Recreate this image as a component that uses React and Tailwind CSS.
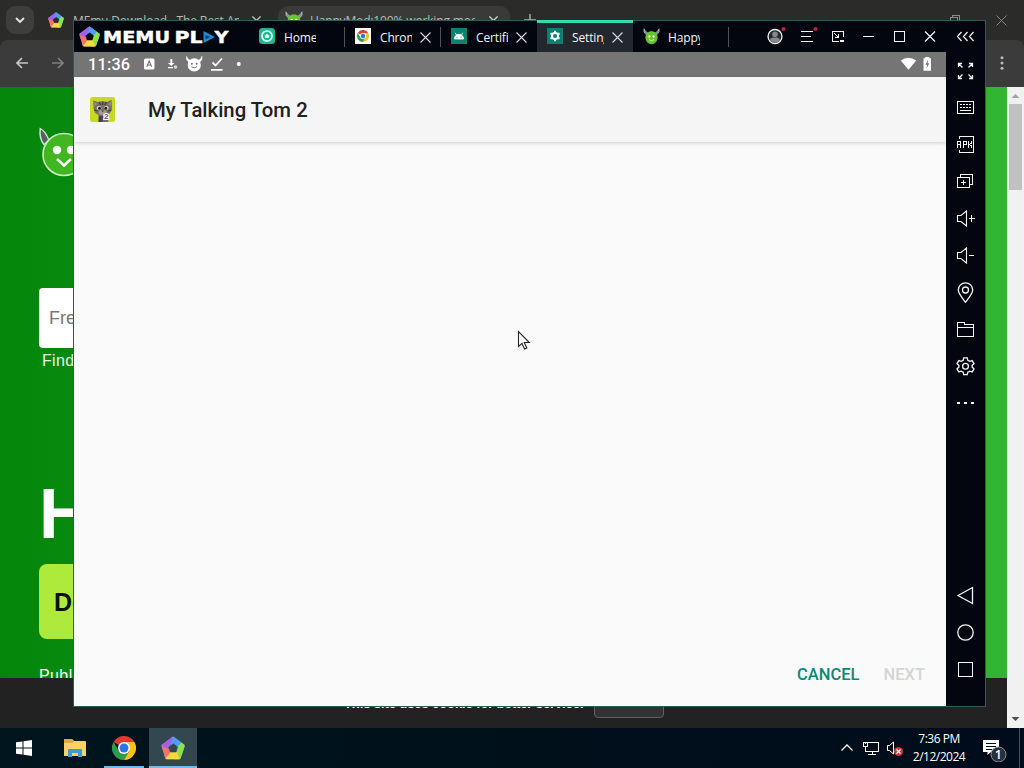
import React from 'react';

const UI = "font-['Open_Sans','Noto_Sans',sans-serif]";
const ARIAL = "font-['Liberation_Sans',Arial,sans-serif]";
const ROBOTO = "font-[Roboto,sans-serif]";

function Pentagon({ size, core = '#101820' }) {
  return (
    <svg width={size} height={size} viewBox="0 0 24 24" className="shrink-0">
      <path d="M12 1.5 L22.8 9.3 L18.7 22.5 H5.3 L1.2 9.3 Z" fill="#8f6fe0" stroke="#8f6fe0" strokeWidth="1.6" strokeLinejoin="round" />
      <path d="M12 0.6 L23 8.6 Q24 9.5 23.4 11 L21.5 17 L15.5 12 L9 7.5 Z" fill="#4fd6b4" />
      <path d="M10.5 1.2 Q12 0.2 13.5 1.3 L20 6.2 L16.5 11 L8.5 7 Z" fill="#4f9cf0" />
      <path d="M20.5 6.8 L23 8.6 Q24 9.5 23.4 11 L19.8 22 Q19.3 23.3 17.8 23.3 H13.5 L16 12 Z" fill="#8fe04a" />
      <path d="M18.5 23.3 H6.2 Q4.7 23.3 4.2 21.9 L3.5 19.5 L9 14.5 L16 16.5 Z" fill="#fbd93f" />
      <path d="M4.6 22.8 L0.6 10.8 Q0.3 9.3 1.4 8.5 L3.5 7 L8.5 11 L9.5 16 Z" fill="#f4716c" />
      <path d="M1.2 8.7 L10.8 1.2 L12 1.5 L9.5 8.5 L8 13 L1.5 10.5 Z" fill="#a062e8" />
      <path d="M12.3 7.8 L16.5 11 L15 16 H9.3 L7.7 11.2 Z" fill={core} stroke={core} strokeWidth="0.6" strokeLinejoin="round" />
    </svg>
  );
}

function Chrome({ size }) {
  return (
    <svg width={size} height={size} viewBox="0 0 24 24" className="shrink-0">
      <path d="M12 12 L1.6 6 A12 12 0 0 1 22.4 6 Z" fill="#e0392d" />
      <path d="M12 12 L17.2 15 L12 24 A12 12 0 0 1 1.6 6 L6.8 15 Z" fill="#2d9d4b" />
      <path d="M12 12 V6 H22.4 A12 12 0 0 1 12 24 L17.2 15 Z" fill="#fbc116" />
      <circle cx="12" cy="12" r="6" fill="#fff" />
      <circle cx="12" cy="12" r="4.5" fill="#2b76e5" />
    </svg>
  );
}

function Imp({ size }) {
  return (
    <svg width={size} height={size} viewBox="0 0 18 18" className="shrink-0">
      <path d="M1 0.8 L1 4.5 L3.8 7.2 L5 5.2 L2.6 3.4 Z M17 0.8 L17 4.500 L14.2 7.2 L13 5.2 L15.4 3.4 Z" fill="#7d8c94" stroke="#c3cdd0" strokeWidth="0.7" />
      <path d="M2.6 9.8 C2.6 5.8 5.2 3.4 9 3.4 S15.4 5.8 15.4 9.8 C15.4 14.200 12.5 17.2 9 17.2 S2.6 14.2 2.6 9.8 Z" fill="#67c52f" />
      <circle cx="6.8" cy="9" r="1.2" fill="#eaffda" />
      <circle cx="11.2" cy="9" r="1.2" fill="#eaffda" />
      <path d="M6.3 12.3 Q9 14.300 11.7 12.3" fill="none" stroke="#d9fbc6" />
    </svg>
  );
}

function Cross({ size = 11, color = '#d8dadd', width = 1.1 }) {
  return (
    <svg width={size} height={size} viewBox="0 0 11 11" className="shrink-0" fill="none" stroke={color} strokeWidth={width}>
      <path d="M0.5 0.5 L10.5 10.5 M10.5 0.5 L0.5 10.5" />
    </svg>
  );
}

function BrowserTabs() {
  return (
    <div className="flex h-[40px] items-center bg-[#2b2b2a] pl-[6px]">
      <div className="flex h-7 w-7 items-center justify-center rounded-[9px] bg-[#3e3e3d]">
        <svg width="10" height="7" viewBox="0 0 10 7" fill="none" stroke="#e8e8e8" strokeWidth="1.8"><path d="M1 1 L5 5 L9 1" /></svg>
      </div>
      <div className="flex h-full w-[244px] items-center pl-[14px]">
        <Pentagon size={16} core="#2b2b2a" />
        <span className="mt-px ml-[9px] w-[166px] overflow-hidden text-[12px] leading-4 tracking-[-0.15px] whitespace-nowrap text-[#b9b9b9]">MEmu Download - The Best An</span>
        <span className="ml-[13px]"><Cross size={9} color="#bdbdbd" width={1.6} /></span>
      </div>
      <div className="mt-[6px] flex h-[34px] w-[232px] items-center rounded-t-[10px] bg-[#3a3a39] pb-[6px] pl-[7px]">
        <Imp size={18} />
        <span className="mt-px ml-[7px] w-[165px] overflow-hidden text-[12px] leading-4 tracking-[-0.15px] whitespace-nowrap text-[#b9b9b9]">HappyMod:100% working mod a</span>
        <span className="ml-[14px]"><Cross size={9} color="#cfcfcf" width={1.6} /></span>
      </div>
      <svg className="ml-[14px]" width="12" height="12" viewBox="0 0 12 12" stroke="#a8a8a8" strokeWidth="1.5"><path d="M6 0 V12 M0 6 H12" /></svg>
      <div className="ml-auto flex items-center gap-[36px] pr-[17px]">
        <svg width="10" height="10" viewBox="0 0 10 10" fill="none" stroke="#8b8b8b" shapeRendering="crispEdges"><path d="M2.5 2.5 V0.5 H9.5 V7.5 H7.5 M0.5 2.5 H7.5 V9.5 H0.5 Z" /></svg>
        <Cross size={11} color="#858585" width={1} />
      </div>
    </div>
  );
}

function BrowserToolbar() {
  return (
    <div className="bg-[#2b2b2a]">
      <div className="flex h-[47px] items-center rounded-t-[8px] bg-[#3c3b3b] pl-4">
        <svg className="mb-px" width="12" height="12" viewBox="0 0 12 12" fill="none" stroke="#c8c8c8" strokeWidth="1.6"><path d="M12 6 H1 M6 1 L1 6 L6 11" /></svg>
        <svg className="mb-px ml-6" width="12" height="12" viewBox="0 0 12 12" fill="none" stroke="#808080" strokeWidth="1.6"><path d="M0 6 H11 M6 1 L11 6 L6 11" /></svg>
        <svg className="mr-[20px] mb-px ml-auto" width="4" height="14" viewBox="0 0 4 14" fill="#b9b9b9"><circle cx="2" cy="1.7" r="1.5" /><circle cx="2" cy="7" r="1.5" /><circle cx="2" cy="12.3" r="1.5" /></svg>
      </div>
    </div>
  );
}

function WebPage() {
  return (
    <div className={`${ARIAL} flex h-[641px]`}>
      <div className="flex w-[1007px] flex-col">
        <div className="h-[591px] overflow-hidden bg-gradient-to-r from-[#04860b] via-[#189f20] to-[#31b632] pt-[40px] pl-[38px]">
          <svg width="52" height="51" viewBox="0 0 52 51">
            <path d="M2.2 1.5 C1.5 8 3 14 6 17.5 L11 13.5 C9 8 7 4 2.2 1.5 Z" fill="#555f66" stroke="#cfe6cf" strokeWidth="1.4" />
            <circle cx="26" cy="27.5" r="21" fill="#40b621" stroke="#c8f0c0" strokeWidth="1.6" />
            <circle cx="19" cy="23" r="4.2" fill="#fff" />
            <circle cx="33" cy="23" r="4.2" fill="#fff" />
            <path d="M19 32 L26 38.5 L33 32" fill="none" stroke="#fff" strokeWidth="2.4" />
          </svg>
          <div className="mt-[110px] ml-[1px] flex h-[60px] w-[300px] items-center rounded bg-white pl-[10px] text-[18px] text-[#777]">Free</div>
          <div className="mt-[4px] ml-[4px] text-[16px] leading-[18px] tracking-[0.3px] text-[#e6f5e4]">Find</div>
          <div className="mt-[104px] ml-px h-[80px] text-[70px] leading-[80px] font-bold text-white">HappyMod</div>
          <div className="mt-[10px] ml-[1px] flex h-[75px] w-[300px] items-center rounded-lg bg-[#aeea3c] pt-[2px] pl-[15px] text-[25px] font-bold text-[#0b1200]">Download</div>
          <div className="mt-[28px] ml-px text-[16px] leading-[18px] tracking-[0.4px] text-white">Published</div>
        </div>
        <div className="flex h-[50px] items-start bg-[#222] pt-[8px] pl-[344px] text-white">
          <span className="w-[250px] pt-[9px] text-[13px] leading-[17px] font-bold tracking-[-0.1px] whitespace-nowrap">This site uses cookie for better service.</span>
          <span className="flex h-[32px] w-[70px] justify-center rounded border border-[#606461] bg-[#303332] pt-[9px] text-[12px] leading-[14px] font-bold">OK</span>
        </div>
      </div>
      <div className="flex w-[17px] flex-col items-center bg-[#f1f1f1]">
        <svg width="17" height="17" viewBox="0 0 17 17"><path d="M4.5 11 L8.5 7 L12.5 11 Z" fill="#a3a3a3" /></svg>
        <div className="h-[86px] w-[13px] bg-[#c1c1c1]" />
        <svg className="mt-auto" width="17" height="17" viewBox="0 0 17 17"><path d="M4.5 6 L8.5 10 L12.5 6 Z" fill="#505050" /></svg>
      </div>
    </div>
  );
}

function MemuTab({ icon, label, active, closable = true, sep = true }) {
  return (
    <div className={active ? 'relative flex h-[31px] w-[96px] items-center bg-[#22282d] pl-[10px]' : 'relative flex h-[31px] w-[96px] items-center pl-[10px]'}>
      {active && <span className="absolute -top-px left-0 h-[3px] w-full bg-[#35dab0]" />}
      <span className="mb-px flex h-4 w-4 shrink-0 items-center justify-center">{icon}</span>
      <span className="ml-[9px] w-[32px] overflow-hidden pt-[3px] text-[12px] leading-5 tracking-[-0.15px] whitespace-nowrap text-[#f2f4f6]">{label}</span>
      {closable && <span className="ml-[8px] pt-px"><Cross /></span>}
      {sep && <span className="absolute top-[6px] right-0 h-5 w-px bg-[#4d5359]" />}
    </div>
  );
}

function TitleBar() {
  return (
    <div className="flex h-[31px] items-center bg-[#03060f] pl-[5px]">
      <Pentagon size={21} core="#03060f" />
      <svg className="ml-[3px] shrink-0" width="128" height="16" viewBox="0 0 128 16" fill="#fff" fontFamily="DejaVu Sans, sans-serif" fontWeight="700" fontSize="15">
        <text x="0" y="13.6" textLength="67" lengthAdjust="spacingAndGlyphs" stroke="#fff" strokeWidth="0.4">MEMU</text>
        <text x="71.5" y="13.6" textLength="28" lengthAdjust="spacingAndGlyphs" stroke="#fff" strokeWidth="0.4">PL</text>
        <path d="M100.5 2 L112 8 L100.5 14 Z" fill="#198cd8" />
        <path d="M102.5 6.2 L107 8 L102.5 10.3 Z" fill="#06345c" />
        <text x="111.5" y="13.6" textLength="14" lengthAdjust="spacingAndGlyphs" stroke="#fff" strokeWidth="0.4">Y</text>
      </svg>
      <div className="ml-[18px] flex">
        <MemuTab label="Home" closable={false} icon={
          <svg width="16" height="16" viewBox="0 0 16 16"><rect width="16" height="16" rx="3.5" fill="#18b991" /><circle cx="8" cy="8" r="5" fill="none" stroke="#e8fff8" strokeWidth="1.7" /><path d="M5.5 7.7 L8 5.7 L10.5 7.7 L9.5 10 H6.5 Z" fill="#d7fff3" /></svg>} />
        <MemuTab label="Chrome" icon={<span className="flex h-4 w-4 items-center justify-center bg-white"><Chrome size={12} /></span>} />
        <MemuTab label="Certificate" sep={false} icon={
          <svg width="16" height="16" viewBox="0 0 16 16"><rect width="16" height="16" fill="#0b846f" /><path d="M3.3 11 A4.7 4.7 0 0 1 12.7 11 Z M4.2 4.8 L5.5 7 M11.8 4.8 L10.5 7" fill="#fff" stroke="#fff" strokeWidth="0.8" /><circle cx="6" cy="9" r="0.6" fill="#0b846f" /><circle cx="10" cy="9" r="0.6" fill="#0b846f" /></svg>} />
        <MemuTab label="Settings" active sep={false} icon={
          <svg width="16" height="16" viewBox="0 0 16 16"><rect width="16" height="16" fill="#0b7f70" /><circle cx="8" cy="8" r="3.1" fill="none" stroke="#fff" strokeWidth="2" /><g stroke="#fff" strokeWidth="2"><path d="M8 2.8 V4 M8 12 V13.2 M3.5 5.4 L4.6 6 M11.4 10 L12.5 10.6 M3.5 10.6 L4.6 10 M11.4 6 L12.5 5.4" /></g></svg>} />
        <MemuTab label="HappyMod" closable={false} icon={<Imp size={17} />} />
      </div>
      <svg className="ml-[33px] shrink-0" width="178" height="31" viewBox="0 0 178 31" fill="none" stroke="#f2f4f6">
        <circle cx="13" cy="15.5" r="7" strokeWidth="1.3" fill="#252a30" />
        <circle cx="13" cy="13.2" r="2.8" fill="#85888c" stroke="none" />
        <path d="M8 19.8 Q8.5 16.5 11 16.5 H15 Q17.5 16.5 18 19.8 Q13 23.5 8 19.8 Z" fill="#85888c" stroke="none" />
        <circle cx="21.5" cy="8" r="2" fill="#c51e48" stroke="none" />
        <circle cx="53.5" cy="8" r="2" fill="#c51e48" stroke="none" />
        <g shapeRendering="crispEdges">
          <path d="M39 10.5 H51 M39 15.5 H49 M39 20.5 H51" />
          <path d="M76.5 20.5 H70.5 V10.5 H81.5 V16" />
          <path d="M78 20 H82" strokeWidth="2" />
          <path d="M72.5 12.5 L76.5 16.5 M76.5 13 V16.5 H73" />
          <path d="M101 15.5 H112" />
          <path d="M132.5 10.5 H142.5 V20.5 H132.5 Z" />
        </g>
        <path d="M163 10.5 L173 20.5 M173 10.5 L163 20.5" strokeWidth="1.3" />
      </svg>
    </div>
  );
}

function StatusBar() {
  return (
    <div className="flex h-[25px] items-center bg-[#757575] pl-[14px]">
      <span className={`${ROBOTO} w-[44px] pt-px text-[16.3px] leading-5 font-medium tracking-[0.2px] text-white`}>11:36</span>
      <svg className="mb-px ml-[10px]" width="110" height="20" viewBox="0 0 110 20" fill="#fff">
        <rect x="2" y="4.5" width="10.5" height="11" rx="1.5" />
        <path d="M4.8 12.7 L7.2 7 L9.6 12.7 M5.8 11 H8.7" fill="none" stroke="#777" strokeWidth="1.1" />
        <path d="M28.3 5 H30.3 V9 H32.5 L29.3 12 L26 9 H28.3 Z M26 13 H31 V14.3 H26 Z" />
        <circle cx="33.5" cy="13" r="1.8" fill="#d8d8d8" />
        <path d="M44.5 2.3 L44.5 5.5 L47 8.5 L48.5 6.5 L46 5 Z M60 2.3 L60 5.5 L57.5 8.5 L56 6.5 L58.5 5 Z" stroke="#fff" strokeWidth="0.5" />
        <circle cx="52.25" cy="10.9" r="6.6" />
        <circle cx="49.9" cy="9.7" r="1" fill="#757575" /><circle cx="54.6" cy="9.7" r="1" fill="#757575" />
        <path d="M49.5 12.7 Q52.25 15 55 12.7" fill="none" stroke="#757575" />
        <path d="M70.5 8.5 L73.5 11.5 L80 4.5 M69 15.8 H80.5" fill="none" stroke="#fff" strokeWidth="1.8" />
        <circle cx="96.8" cy="10" r="2" />
      </svg>
      <svg className="mr-[12px] mb-px ml-auto" width="34" height="20" viewBox="0 0 34 20" fill="#fff">
        <path d="M0.8 6.5 Q8.5 1 16.2 6.5 L8.5 15.8 Z" />
        <path d="M23.5 4.2 H25.2 V3 H29.3 V4.2 H31 V16.8 H23.5 Z" />
        <path d="M28.2 5.5 L25.4 10.8 H27.2 L26.4 14.8 L29.3 9.3 H27.6 Z" fill="#757575" />
      </svg>
    </div>
  );
}

function TomIcon() {
  return (
    <svg width="26" height="26" viewBox="0 0 26 26" className="shrink-0">
      <rect width="25" height="25" rx="2.5" fill="#c7da23" />
      <path d="M8.5 18 L5 16 L3.5 11 L3.3 3.5 L8 5 Q12.5 3.5 17 5 L21.5 2.8 L22 10 Q22 15 17.5 18 L18.5 25 H8 Z" fill="#77706a" />
      <path d="M9 5 L11 8 M12.7 4.5 V8 M16.5 5 L14.5 8 M4 13 L7.5 14 M21.5 13 L18 14" stroke="#403b39" strokeWidth="1.2" />
      <path d="M4.5 5 L7 7 L4.8 9 Z M20.8 4.8 L18.3 7 L20.8 9 Z" fill="#b08f85" />
      <ellipse cx="9" cy="11" rx="2.4" ry="2" fill="#dadbc8" /><ellipse cx="16.3" cy="11" rx="2.4" ry="2" fill="#dadbc8" />
      <circle cx="9.5" cy="11.2" r="1.5" fill="#222" /><circle cx="15.8" cy="11.2" r="1.5" fill="#222" />
      <ellipse cx="12.7" cy="15.5" rx="4" ry="2.4" fill="#a49c94" /><path d="M11.3 13.5 H14.1 L12.7 15.3 Z" fill="#493437" />
      <path d="M9 19.5 L13 18.5 L12.5 25 H9 Z" fill="#45414a" />
      <text x="14" y="22" fontFamily="Liberation Sans, Arial, sans-serif" fontSize="8" fontWeight="700" fill="#6a42ad" stroke="#fff" strokeWidth="2.2" paintOrder="stroke">2</text>
    </svg>
  );
}

function Tool({ children }) {
  return (
    <div className="flex h-[37px] items-center justify-center">
      <svg width="21" height="21" viewBox="0 0 21 21" fill="none" stroke="#f2f4f6" strokeWidth="1.1">{children}</svg>
    </div>
  );
}

function Sidebar() {
  return (
    <div className="flex w-[39px] flex-col bg-[#03060f]">
      <div className="flex h-[31px] items-center justify-center">
        <svg width="19" height="11" viewBox="0 0 19 11" fill="none" stroke="#f2f4f6" strokeWidth="1.2"><path d="M5.5 1 L1.5 5.5 L5.5 10 M11.5 1 L7.5 5.5 L11.5 10 M17.5 1 L13.5 5.5 L17.5 10" /></svg>
      </div>
      <Tool><g strokeWidth="1.3"><path d="M3.5 7 V3.5 H7 M3.5 3.5 L7.5 7.5 M14 3.5 H17.5 V7 M17.5 3.5 L13.5 7.5 M3.5 15 V18.5 H7 M3.5 18.5 L7.5 14.5 M17.5 15 V18.5 H14 M17.5 18.5 L13.5 14.5" /></g></Tool>
      <Tool><g shapeRendering="crispEdges"><path d="M2.5 4.5 H18.5 V16.5 H2.5 Z" /><path d="M5 7.5 H17 M5 10.5 H17" strokeDasharray="2 1" /><path d="M5 13.5 H16" /></g></Tool>
      <Tool><g shapeRendering="crispEdges"><path d="M4.5 5 V2.5 H18.5 V18.5 H4.5 V16" /><path d="M2.5 14 V7.5 H5.5 V14 M2.5 10.5 H5.5 M8.5 14 V7.5 H11.5 V10.5 H8.5 M13.5 7 V14" /><path d="M16.5 7 V9.5 L14 10.5 L16.5 11.5 V14" /></g></Tool>
      <Tool><g shapeRendering="crispEdges"><path d="M5.5 6.5 V3.5 H17.5 V13.5 H14.5 M2.5 6.5 H14.5 V16.5 H2.5 Z M8.5 9 V14 M6 11.5 H11" /></g></Tool>
      <Tool><path d="M2.5 7.5 H6 L11.5 3 V18 L6 13.5 H2.5 Z" /><path d="M13.5 10.5 H20 M16.5 7 V14" shapeRendering="crispEdges" /></Tool>
      <Tool><path d="M2.5 7.5 H6 L11.5 3 V18 L6 13.5 H2.5 Z" /><path d="M14 10.5 H19" shapeRendering="crispEdges" /></Tool>
      <Tool><path d="M10.5 20.2 C6 14.5 3.3 11.5 3.3 8 A7.2 7.2 0 0 1 17.7 8 C17.7 11.5 15 14.5 10.5 20.2 Z" strokeWidth="1.3" /><circle cx="10.5" cy="8" r="3" strokeWidth="1.3" /></Tool>
      <Tool><path d="M2.5 17.5 V3.5 H9.5 V5.5 H18.5 V17.5 Z M2.5 8.5 H18.5" shapeRendering="crispEdges" /></Tool>
      <Tool><g transform="translate(0 -0.5)"><path d="M8.7 2.3 H12.3 L12.8 4.8 L14.8 5.9 L17.2 5.1 L19 8.2 L17.1 9.9 V11.6 L19 13.3 L17.2 16.4 L14.8 15.6 L12.8 16.7 L12.3 19.2 H8.7 L8.2 16.7 L6.2 15.6 L3.8 16.4 L2 13.3 L3.9 11.6 V9.9 L2 8.2 L3.8 5.1 L6.2 5.9 L8.2 4.8 Z" strokeWidth="1.3" /><circle cx="10.5" cy="10.75" r="2.9" strokeWidth="1.3" /></g></Tool>
      <Tool><path d="M2 10 H5 M9 10 H12 M16 10 H19" strokeWidth="2" shapeRendering="crispEdges" /></Tool>
      <div className="mt-auto pb-[18px]">
        <Tool><path d="M3 10.5 L17.5 2.5 V18.5 Z" strokeWidth="1.3" /></Tool>
        <Tool><circle cx="10.5" cy="10.5" r="7.7" strokeWidth="1.3" /></Tool>
        <Tool><path d="M3.5 3.5 H17.5 V17.5 H3.5 Z" shapeRendering="crispEdges" /></Tool>
      </div>
    </div>
  );
}

function MemuWindow() {
  return (
    <div className="absolute top-[20px] left-[73px] flex h-[687px] w-[913px] border border-[#365955] bg-[#03060f]">
      <div className="flex w-[872px] flex-col">
        <TitleBar />
        <StatusBar />
        <div className={`${ROBOTO} z-10 flex h-[65px] items-center bg-[#f5f5f5] pl-4 shadow-[0_1px_4px_rgba(0,0,0,0.18)]`}>
          <TomIcon />
          <h1 className="ml-8 text-[20.3px] leading-7 font-medium tracking-[0.03px] text-[#212121]">My Talking Tom 2</h1>
        </div>
        <div className={`${ROBOTO} flex flex-1 items-end justify-end gap-[24px] bg-[#fafafa] pr-[21px] pb-[21.5px] text-[16.5px] leading-5 font-medium`}>
          <button className="text-[#0a8970]">CANCEL</button>
          <button className="text-[#d4d4d4]">NEXT</button>
        </div>
      </div>
      <Sidebar />
    </div>
  );
}

function Taskbar() {
  return (
    <div className="flex h-[40px] items-center bg-gradient-to-r from-[#00151e] via-[#00101b] to-[#000c1b]">
      <div className="flex w-12 justify-center">
        <svg width="16" height="16" viewBox="0 0 16 16" fill="#fff"><path d="M0 2.3 L6.5 1.4 V7.5 H0 Z M7.5 1.2 L16 0 V7.5 H7.5 Z M0 8.5 H6.5 V14.6 L0 13.7 Z M7.5 8.5 H16 V16 L7.5 14.8 Z" /></svg>
      </div>
      <div className="ml-4">
        <svg width="22" height="20" viewBox="0 0 22 20"><path d="M0 2 Q0 1 1 1 H8 L10 3 H21 Q22 3 22 4 V18 H0 Z" fill="#f9d267" /><path d="M0 2 Q0 1 1 1 H8 L10 3 L8 5 H0 Z" fill="#e5a63a" /><path d="M4 19 V12 Q4 11 5 11 H17 Q18 11 18 12 V19 H14 V15 H8 V19 Z" fill="#4599c9" /></svg>
      </div>
      <div className="ml-[18px] flex h-10 w-10 flex-col items-center justify-end"><span className="mb-[6px]"><Chrome size={24} /></span><span className="h-[2px] w-full bg-[#76b9ed]" /></div>
      <div className="ml-[5px] flex h-10 w-12 flex-col items-center justify-end bg-[#33474e]"><span className="mb-[6px]"><Pentagon size={24} core="#33474e" /></span><span className="h-[2px] w-full bg-[#76b9ed]" /></div>
      <svg className="mr-[8px] ml-auto" width="64" height="24" viewBox="0 0 64 24" fill="none" stroke="#fff">
        <path d="M1.5 14.5 L7 9 L12.5 14.5" strokeWidth="1.3" />
        <g shapeRendering="crispEdges"><path d="M27.5 6.5 H38.5 V15.5 H25.5 V11 M23.5 6.5 H27.5 V10.5 H23.5 Z M32.5 15.5 V18.5 M28 18.5 H36 M25.5 6 V8" /></g>
        <path d="M47.5 9.5 H49.5 L53.5 6 V18 L49.5 14.5 H47.5 Z" />
        <circle cx="58.5" cy="15.5" r="4.5" fill="#cf383b" stroke="none" /><path d="M56.5 13.5 L60.5 17.5 M60.5 13.5 L56.5 17.5" strokeWidth="1.2" />
      </svg>
      <div className="w-[54px] text-center text-[12px] leading-[18px] tracking-[-0.5px] whitespace-nowrap text-white"><div>7:36 PM</div><div>2/12/2024</div></div>
      <svg className="ml-[16px]" width="26" height="28" viewBox="0 0 26 28">
        <path d="M1 6 H17 V18 H9 L5.5 21 V18 H1 Z" fill="#fff" /><path d="M4 9.5 H14 M4 12.5 H14 M4 15.5 H10" stroke="#00101b" />
        <circle cx="16.5" cy="20.5" r="7.5" fill="#24303a" stroke="#8a9298" />
        <text x="16.3" y="25" textAnchor="middle" fontSize="12.5" fontWeight="600" fill="#fff">1</text>
      </svg>
      <span className="mr-[4px] ml-[11px] h-full w-px bg-[#43515b]" />
    </div>
  );
}

export default function App() {
  return (
    <div className={`${UI} relative h-[768px] w-[1024px] overflow-hidden bg-[#222]`}>
      <BrowserTabs />
      <BrowserToolbar />
      <WebPage />
      <Taskbar />
      <MemuWindow />
      <svg className="absolute top-[330px] left-[517px]" width="14" height="21" viewBox="0 0 14 21"><path d="M1.5 1.5 V16.5 L5 13.3 L7.5 19 L9.8 18 L7.3 12.5 H12.3 Z" fill="#fff" stroke="#222" strokeWidth="1.1" /></svg>
    </div>
  );
}
